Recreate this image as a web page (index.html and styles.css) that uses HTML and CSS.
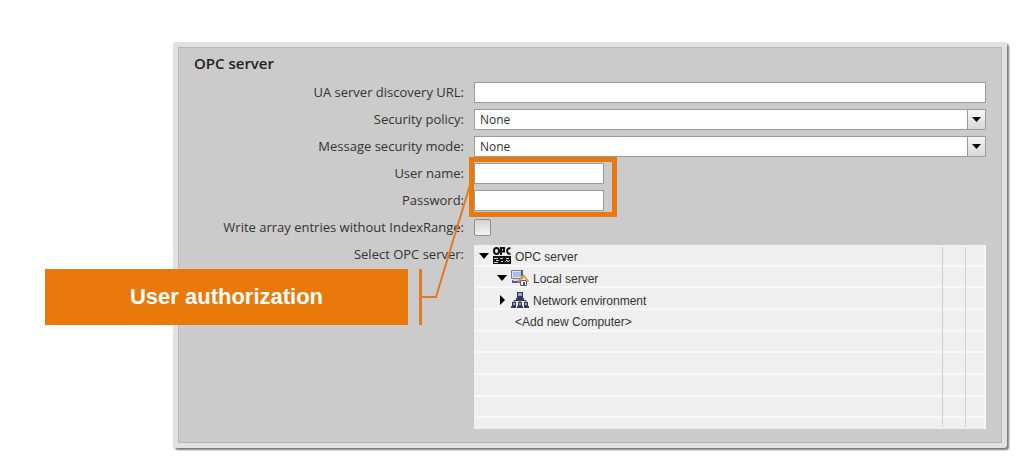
FILE: index.html
```html
<!DOCTYPE html>
<html lang="en">
<head>
    <meta charset="UTF-8">
    <title>OPC server</title>
    <link rel="stylesheet" href="styles.css">
</head>
<body>
    <main class="page">
        <section class="panel">
            <h2>OPC server</h2>
            <form class="settings">
                <label for="discoveryUrl">UA server discovery URL:</label>
                <input type="text" id="discoveryUrl">

                <label for="securityPolicy">Security policy:</label>
                <div class="select-box">
                    <select id="securityPolicy"><option>None</option></select>
                    <span class="arrow"><svg width="9" height="5"><path d="M0 0h9L4.500 5z"/></svg></span>
                </div>

                <label for="securityMode">Message security mode:</label>
                <div class="select-box">
                    <select id="securityMode"><option>None</option></select>
                    <span class="arrow"><svg width="9" height="5"><path d="M0 0h9L4.500 5z"/></svg></span>
                </div>

                <label for="userName">User name:</label>
                <input type="text" id="userName" class="short">

                <label for="password">Password:</label>
                <input type="password" id="password" class="short">

                <label for="indexRange">Write array entries without IndexRange:</label>
                <input type="checkbox" id="indexRange">

                <span class="label" id="treeLabel">Select OPC server:</span>
                <ul class="tree" aria-labelledby="treeLabel">
                    <li>
                        <svg class="toggle" width="10" height="10"><path d="M0 2h10L5 8z"/></svg>
                        <svg width="18" height="18" viewBox="0 0 18 18">
                            <g fill="none" stroke="#111" stroke-width="2">
                                <ellipse cx="3.500" cy="4" rx="2.500" ry="3"/>
                                <path d="M8 8V1h3v3.500H8M17.500 1.500C13 0 13 8 17.500 6.500"/>
                            </g>
                            <path fill="#111" d="M0 9h18v8H0z"/>
                            <path stroke="#ccc" fill="none" d="M1 11.500h4M3 13.500h3M1 15.500h4M7 11.500h3M8 14.500h2M13 11.500h3M12 15l2-2 1 2 2-2"/>
                        </svg>
                        <span>OPC server</span>
                    </li>
                    <li class="child">
                        <svg class="toggle" width="10" height="10"><path d="M0 2h10L5 8z"/></svg>
                        <svg width="18" height="18" viewBox="0 0 18 18">
                            <path fill="#dfe3ec" stroke="#777b91" d="M.5 1.500h11v8H.5z"/>
                            <path fill="#a9bfe8" d="M2 3h8v5H2z"/>
                            <path fill="#4e5c8c" d="M10 1h2v9h-2zM1 11h9v3H1z"/>
                            <path fill="#d4d8e4" d="M2 10h7v2H2z"/>
                            <path fill="#fff" stroke="#51597c" d="M9.500 11.500h6v5h-6z"/>
                            <path fill="none" stroke="#e5953f" stroke-width="2" d="M7 13l5.500-6.500 5 6.500"/>
                            <path fill="#51597c" d="M12 13h2v4h-2z"/>
                        </svg>
                        <span>Local server</span>
                    </li>
                    <li class="child">
                        <svg class="toggle" width="10" height="10"><path d="M3 0v10l5-5z"/></svg>
                        <svg width="18" height="18" viewBox="0 0 18 18">
                            <path fill="#353a55" d="M6 1h6v6H6zM5 7h8v2H5zM1 11h4v4H1zM7 11h4v4H7zM13 11h4v4h-4zM0 15h5v2H0zM6 15h6v2H6zM13 15h5v2h-5z"/>
                            <path fill="none" stroke="#353a55" d="M9 8v3M3 11.500v-2h12v2"/>
                            <path fill="#8ba2d5" d="M7 2h4v3H7zM2 12h2v2H2zM8 12h2v2H8zM14 12h2v2h-2z"/>
                        </svg>
                        <span>Network environment</span>
                    </li>
                    <li class="add">&lt;Add new Computer&gt;</li>
                    <li></li>
                    <li></li>
                    <li></li>
                    <li></li>
                    <li></li>
                </ul>
            </form>
        </section>

        <!-- annotation over the form -->
        <div class="highlight"></div>
        <div class="callout">User authorization</div>
        <svg class="connector" width="56" height="144" viewBox="0 0 56 144">
            <path d="M2.500 116H17L51 4" fill="none" stroke="#e07a25" stroke-width="2"/>
            <path d="M0 88h3v56H0z" fill="#e07a25"/>
        </svg>
    </main>
</body>
</html>
```
FILE: styles.css
```css
* {
    box-sizing: border-box;
}

body {
    margin: 0;
    background: #fff;
    color: #333;
    font-family: "Open Sans", sans-serif;
    font-size: 12px;
}

.page {
    position: relative;
    padding: 42px 17px 24px 173px;
}

.panel {
    padding: 6px 16px;
    background: #cbcbcb;
    border: 5px solid #e1e1e1;
    border-top-width: 6px;
    border-radius: 3px;
    outline: 1px solid #b8b8b8;
    outline-offset: -6px;
    box-shadow: 2px 2px 2px #777;
    padding-bottom: 14px;
}

h2 {
    margin: 0 0 10px;
    color: #222;
    font-size: 15px;
    font-weight: 600;
    line-height: 18px;
}

.settings {
    display: grid;
    grid-template-columns: 270px 1fr;
    column-gap: 10px;
    row-gap: 6px;
}

.settings label,
.label {
    font-size: 13px;
    text-align: right;
    line-height: 21px;
}

input[type="text"],
input[type="password"],
select {
    width: 100%;
    height: 21px;
    margin: 0;
    padding: 0 5px;
    border: 1px solid #9b9b9b;
    border-radius: 0;
    background: #fff;
    color: #333;
    font: inherit;
    appearance: none;
}

input.short {
    width: 130px;
}

input[type="checkbox"] {
    width: 17px;
    height: 17px;
    margin: 2px 0;
    border: 1px solid #8c8c8c;
    border-radius: 2px;
    background: linear-gradient(#d2d2d2, #f4f4f4);
    appearance: none;
}

.select-box {
    position: relative;
    height: 21px;
}

.arrow {
    position: absolute;
    top: 0;
    right: 0;
    display: flex;
    align-items: center;
    justify-content: center;
    width: 19px;
    height: 21px;
    border: 1px solid #9b9b9b;
    background: linear-gradient(#f5f5f5, #d8d8d8);
    pointer-events: none;
}

.tree {
    position: relative;
    display: grid;
    grid-template-rows: repeat(8, 2fr) 1fr;
    height: 184px;
    margin: 1px 0 0;
    padding: 0;
    list-style: none;
    background: #efefef;
    border-right: 2px solid #f7f7f7;
    font-family: "Liberation Sans", sans-serif;
}

/* two narrow columns on the right edge */
.tree::after {
    content: "";
    position: absolute;
    top: 2px;
    right: 18px;
    bottom: 2px;
    width: 22px;
    border: solid #d0d0d0;
    border-width: 0 1px;
}

.tree li {
    display: flex;
    align-items: center;
    gap: 4px;
    min-height: 0;
    padding: 5px 0 0 5px;
    border-bottom: 2px solid #f8f8f8;
    white-space: nowrap;
}

.tree li:last-child {
    padding: 0;
    border-bottom: 0;
}

.tree li.child {
    padding-left: 23px;
}

.tree li.add {
    padding-left: 41px;
}

/* icons stand a little higher than the text beside them */
.tree svg {
    flex: none;
    margin-bottom: 2px;
}

.highlight {
    position: absolute;
    top: 157px;
    left: 469px;
    width: 148px;
    height: 60px;
    border: 5px solid #e8790f;
    pointer-events: none;
}

.callout {
    position: absolute;
    top: 269px;
    left: 45px;
    width: 363px;
    background: #ea790c;
    color: #fff;
    font-family: "Liberation Sans", sans-serif;
    font-size: 22px;
    font-weight: bold;
    line-height: 56px;
    text-align: center;
}

.connector {
    position: absolute;
    top: 181px;
    left: 419px;
    pointer-events: none;
}
```
